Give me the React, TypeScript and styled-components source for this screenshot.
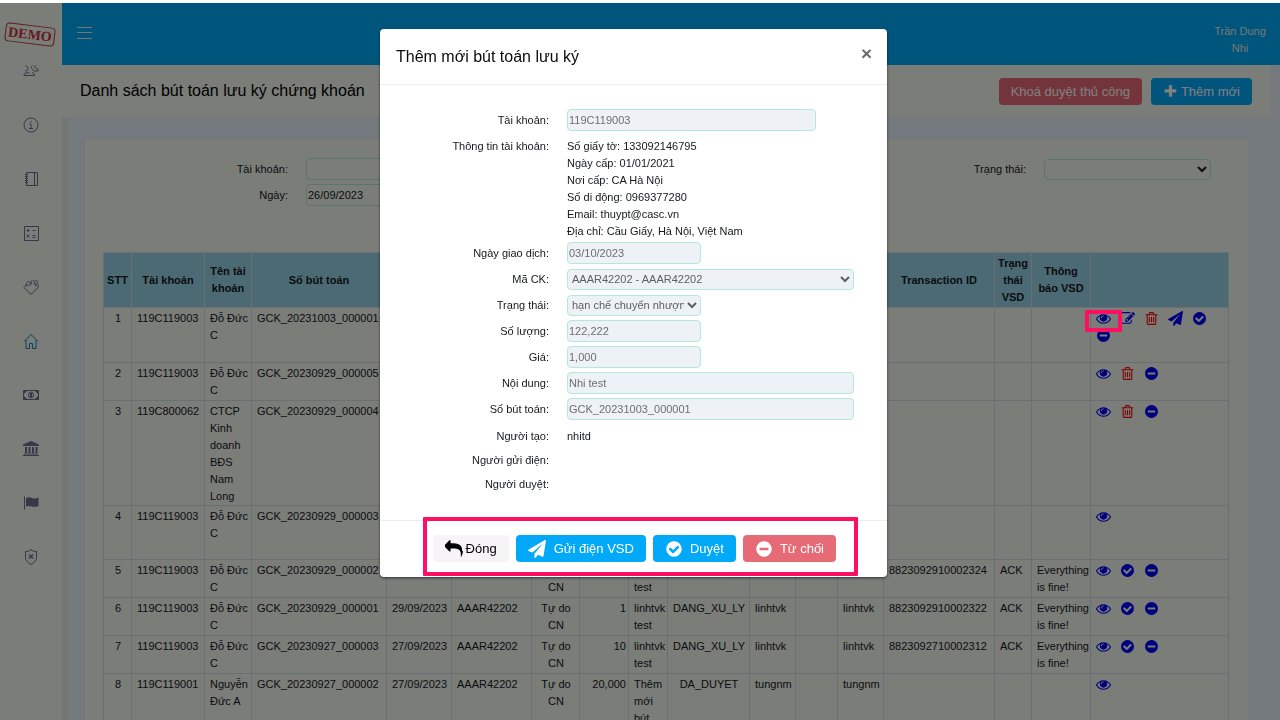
import React from "react";
import styled, { createGlobalStyle, css } from "styled-components";

const GlobalStyle = createGlobalStyle`
  *, *::before, *::after { box-sizing: border-box; }
  html, body { margin: 0; background: #fff; }
  body {
    font-family: "Liberation Sans", Arial, sans-serif;
    font-size: 11px;
    line-height: 17px;
    color: #15181c;
  }
  button, input, select { font-family: inherit; }
`;

/* ---------- icons ---------- */

const CIRCLE =
  "M1664 896q0 209-103 385.5t-279.5 279.5-385.5 103-385.5-103-279.5-279.5-103-385.5 103-385.5 279.5-279.5 385.5-103 385.5 103 279.5 279.5 103 385.5z";

const GLYPHS = {
  eye: "M1664 960q-152-236-381-353 61 104 61 225 0 185-131.5 316.5t-316.5 131.5-316.5-131.5-131.5-316.5q0-121 61-225-229 117-381 353 133 205 333.5 326.5t434.5 121.5 434.5-121.5 333.5-326.5zm-720-384q0-20-14-34t-34-14q-125 0-214.5 89.5t-89.5 214.5q0 20 14 34t34 14 34-14 14-34q0-86 61-147t147-61q20 0 34-14t14-34zm848 384q0 34-20 69-140 230-376.5 368.5t-499.5 138.5-499.5-139-376.5-368q-20-35-20-69t20-69q140-229 376.5-368t499.5-139 499.5 139 376.5 368q20 35 20 69z",
  edit: "M888 1184l116-116-152-152-116 116v56h96v96h56zm440-720q-16-16-33 1l-350 350q-17 17-1 33t33-1l350-350q17-17 1-33zm80 594v190q0 119-84.5 203.5t-203.5 84.5h-832q-119 0-203.5-84.5t-84.5-203.5v-832q0-119 84.5-203.5t203.5-84.5h832q63 0 117 25 15 7 18 23 3 17-9 29l-49 49q-14 14-32 8-23-6-45-6h-832q-66 0-113 47t-47 113v832q0 66 47 113t113 47h832q66 0 113-47t47-113v-126q0-13 9-22l64-64q15-15 35-7t20 29zm-96-738l288 288-672 672h-288v-288zm444 132l-92 92-288-288 92-92q28-28 68-28t68 28l152 152q28 28 28 68t-28 68z",
  trash:
    "M704 736v576q0 14-9 23t-23 9h-64q-14 0-23-9t-9-23v-576q0-14 9-23t23-9h64q14 0 23 9t9 23zm256 0v576q0 14-9 23t-23 9h-64q-14 0-23-9t-9-23v-576q0-14 9-23t23-9h64q14 0 23 9t9 23zm256 0v576q0 14-9 23t-23 9h-64q-14 0-23-9t-9-23v-576q0-14 9-23t23-9h64q14 0 23 9t9 23zm128 724v-948h-896v948q0 22 7 40.5t14.5 27 10.5 8.5h832q3 0 10.5-8.5t14.5-27 7-40.5zm-672-1076h448l-48-117q-7-9-17-11h-317q-10 2-17 11zm928 32v64q0 14-9 23t-23 9h-96v948q0 83-47 143.5t-113 60.5h-832q-66 0-113-58.5t-47-141.5v-952h-96q-14 0-23-9t-9-23v-64q0-14 9-23t23-9h309l70-167q15-37 54-63t79-26h320q40 0 79 26t54 63l70 167h309q14 0 23 9t9 23z",
  send: "M1764 11q33 24 27 64l-256 1536q-5 29-32 45-14 8-31 8-11 0-24-5l-453-185-242 295q-18 23-49 23-13 0-22-4-19-7-30.5-23.5t-11.5-36.5v-349l864-1059-1069 925-395-162q-37-14-40-55-2-40 32-59l1664-960q15-9 32-9 20 0 36 11z",
  check:
    "M1412 734q0-28-18-46l-91-90q-19-19-45-19t-45 19l-408 407-226-226q-19-19-45-19t-45 19l-91 90q-18 18-18 46 0 27 18 45l362 362q19 19 45 19 27 0 46-19l543-543q18-18 18-45z" +
    CIRCLE,
  minus:
    "M1344 960v-128q0-26-19-45t-45-19h-768q-26 0-45 19t-19 45v128q0 26 19 45t45 19h768q26 0 45-19t19-45z" +
    CIRCLE,
  plus: "M1600 736v192q0 40-28 68t-68 28h-416v416q0 40-28 68t-68 28h-192q-40 0-68-28t-28-68v-416h-416q-40 0-68-28t-28-68v-192q0-40 28-68t68-28h416v-416q0-40 28-68t68-28h192q40 0 68 28t28 68v416h416q40 0 68 28t28 68z",
  reply:
    "M1792 1120q0 166-127 451-3 7-10.5 24t-13.5 30-13 22q-12 17-28 17-15 0-23.5-10t-8.5-25q0-9 2.5-26.5t2.5-23.5q5-68 5-123 0-112-19.5-200.5t-54-153-89-111.5-118.5-77-149.5-46-175-24-196.5-7h-224v256q0 26-19 45t-45 19-45-19l-512-512q-19-19-19-45t19-45l512-512q19-19 45-19t45 19 19 45v256h224q713 0 875 403 53 134 53 333z",
};

type GlyphName = keyof typeof GLYPHS;

const Glyph = ({ name, size }: { name: GlyphName; size: number }) => (
  <svg width={size} height={size} viewBox="0 0 1792 1792" fill="currentColor" fillRule="evenodd" aria-hidden="true">
    <path d={GLYPHS[name]} />
  </svg>
);

const LineIcon = ({ children }: { children: React.ReactNode }) => (
  <svg width="16" height="16" viewBox="0 0 16 16" fill="none" stroke="currentColor" strokeWidth="1" aria-hidden="true">
    {children}
  </svg>
);

const MENU: { label: string; icon: React.ReactNode; active?: boolean }[] = [
  {
    label: "Khách hàng",
    icon: (
      <LineIcon>
        <path d="M2.500 2.500 5 4.500v2L2 8.500M1 12.500h10.500v-1.500L9 9.500M1 12.500V11l3-1.500 2.500.5M9.500 2.500c-1.500 1-1.500 2.500 0 4M13 2.500c-2 .5-2 2 0 2.500 2 .5 2.500 1.500 2 3h-3.500M9.500 6.500l2 2" />
      </LineIcon>
    ),
  },
  {
    label: "Thông tin",
    icon: (
      <LineIcon>
        <circle cx="8" cy="8" r="7" />
        <path d="M8 4v1.500M6.500 7H8v4.500M6 11.500h4" />
      </LineIcon>
    ),
  },
  {
    label: "Sổ",
    icon: (
      <LineIcon>
        <path d="M3.500 1.500h11v13h-11zM11.500 1.500v13M2 3.500h3M2 5.500h3M2 7.500h3M2 9.500h3M2 11.500h3" />
      </LineIcon>
    ),
  },
  {
    label: "Tính toán",
    icon: (
      <LineIcon>
        <path d="M1.500 1.500h14v14h-14zM3.500 5.500h3M5 4v3M9.500 5.500h3M3.500 9.500l3 3M6.500 9.500l-3 3M9.500 10.500h3M9.500 12.500h3" />
      </LineIcon>
    ),
  },
  {
    label: "Nhãn",
    icon: (
      <LineIcon>
        <path d="M3.500 5.500 1 8.500l7 7 7-7V5M3.500 6.500c1.500.5 3-.5 3.500-2S6 2 4.500 3s-1.500 2.500-1 3.500zM8.500 1.500C8 3 8.500 5 7.500 6.500M9.500 2c2-1 3 .5 2 1.500s-1 1.500.5 1.500 1.500 1.500 0 2.500M12.500 1.500c1.500-.5 2.500.5 2 2s-1.500 1.500-2.500 1.500" />
      </LineIcon>
    ),
  },
  {
    label: "Trang chủ",
    active: true,
    icon: (
      <LineIcon>
        <path d="M1 8.500 8 1.500l7 7M3 7v8.500h3.500v-5h3v5H13V7" />
      </LineIcon>
    ),
  },
  {
    label: "Tiền",
    icon: (
      <LineIcon>
        <path d="M.5 3.500h15v9H.5z" />
        <path d="M1 4h2.500L1 6.500zM15 4v2.500L12.500 4zM1 12V9.500L3.500 12zM15 12h-2.500L15 9.500z" fill="currentColor" />
        <ellipse cx="8" cy="8" rx="2.500" ry="3" />
        <path d="M8 6v4" strokeWidth="2" />
      </LineIcon>
    ),
  },
  {
    label: "Ngân hàng",
    icon: (
      <LineIcon>
        <path d="M8 0 0 3.500V5h16V3.500zM2 6h2v6H2zM5.500 6h2v6h-2zM9 6h2v6H9zM12.500 6h2v6h-2zM1 12.500h14v1H1zM0 14h16v1H0z" fill="currentColor" stroke="none" />
      </LineIcon>
    ),
  },
  {
    label: "Cờ",
    icon: (
      <LineIcon>
        <path d="M1.500 1.500v13" />
        <path d="M3 3.500c2-1.500 4-1.500 6-.5s4 .5 6.500-.5v8.500c-2.500 1-4.500 1-6.500.5s-4-1-6 0z" fill="currentColor" stroke="none" />
      </LineIcon>
    ),
  },
  {
    label: "Bảo mật",
    icon: (
      <LineIcon>
        <path d="M8 .5C7 2 4.500 2.500 2.500 2.500v6c0 3.500 3 5.500 5.500 7 2.500-1.500 5.500-3.500 5.500-7v-6C11.500 2.500 9 2 8 .5z" />
        <path d="M6 5.500l4 4M10 5.500l-4 4" strokeWidth="1.500" />
      </LineIcon>
    ),
  },
];

/* ---------- shell ---------- */

const Page = styled.div`
  display: flex;
  height: 100vh;
  padding-top: 3px;
  overflow: hidden;
`;

const Sidebar = styled.nav`
  flex: 0 0 62px;
  display: flex;
  flex-direction: column;
  align-items: center;
  padding-top: 22px;
  background: #f7faf3;
`;

const Logo = styled.div`
  width: 50px;
  height: 19px;
  margin: 0 3px 0 0;
  border: 1px solid #c8323a;
  border-radius: 4px;
  color: #c8323a;
  font: bold 14px/17px "Liberation Serif", serif;
  text-align: center;
  transform: rotate(7deg);
`;

const MenuLink = styled.a<{ $active?: boolean }>`
  display: flex;
  align-items: center;
  justify-content: center;
  width: 62px;
  height: 54px;
  color: ${(p) => (p.$active ? "#0a86c4" : "#6e6e92")};
`;

const Main = styled.div`
  flex: 1;
  min-width: 0;
  display: flex;
  flex-direction: column;
  background: #e9f2fc;
`;

const TopBar = styled.header`
  flex: 0 0 62px;
  display: flex;
  align-items: center;
  justify-content: space-between;
  padding: 0 12px 0 14px;
  background: #00aaf8;
`;

const MenuButton = styled.button`
  display: flex;
  padding: 0 0 2px;
  border: 0;
  background: none;
  color: #e6eef2;
`;

const UserName = styled.div`
  width: 56px;
  padding-top: 12px;
  text-align: center;
  color: #e8edf0;
`;

const TitleBar = styled.div`
  flex: 0 0 52px;
  display: flex;
  align-items: center;
  gap: 9px;
  margin-right: 9px;
  padding: 0 19px 0 18px;
  background: #f7faf3;
`;

const PageTitle = styled.h1`
  flex: 1;
  margin: 0;
  font-size: 16px;
  line-height: 24px;
  font-weight: 400;
  color: #000;
`;

const tones = {
  primary: css`
    background: #03a9f9;
    color: #fff;
  `,
  danger: css`
    background: #e76b77;
    color: #fff;
  `,
  plain: css`
    background: #f7f4f8;
    color: #000;
  `,
};

const Button = styled.button<{ $tone: keyof typeof tones; $gap?: number }>`
  display: flex;
  align-items: center;
  gap: ${(p) => p.$gap ?? 3}px;
  height: 27px;
  padding: 0 12px;
  border: 0;
  border-radius: 4px;
  font-size: 13px;
  white-space: nowrap;
  ${(p) => tones[p.$tone]}
`;

const Content = styled.main`
  flex: 1;
  min-height: 0;
  padding: 23px 32px 0 17px;
  border-left: 6px solid #ebebe8;
`;

const Card = styled.section`
  height: 100%;
  padding: 18px 20px 0 18px;
  background: #f7faf3;
`;

/* ---------- form controls ---------- */

const control = css`
  height: 22px;
  border: 1px solid #b4e8dc;
  border-radius: 4px;
  font-size: 11px;
  color: inherit;
  background: transparent;
`;

const TextInput = styled.input`
  ${control}
  width: 100%;
  padding: 0 1px;
  &:disabled {
    background: #eef1f6;
    color: #6b6f74;
  }
`;

const Select = styled.select`
  ${control}
  width: 100%;
  height: 21px;
  padding: 0;
  &:disabled {
    background: #eef1f6;
    color: #5c6065;
    opacity: 1;
  }
`;

const Filters = styled.form`
  display: grid;
  grid-template-columns: 185px 167px 1fr 167px;
  column-gap: 18px;
  row-gap: 4px;
  align-items: center;
  height: 94px;
  align-content: start;
  padding-right: 17px;
`;

const Label = styled.label`
  text-align: right;
`;

/* ---------- table ---------- */

const Table = styled.table`
  width: 100%;
  table-layout: fixed;
  border-collapse: collapse;
`;

const Th = styled.th`
  height: 55px;
  padding: 1px 3px;
  border: 1px solid #d4dee8;
  background: #98d4e8;
  font-weight: 700;
`;

const Td = styled.td<{ $align?: string }>`
  padding: 2px 0 0 5px;
  border: 1px solid #d4dee8;
  vertical-align: top;
  text-align: ${(p) => p.$align ?? "left"};
  padding-right: ${(p) => (p.$align === "center" ? 4 : p.$align === "right" ? 2 : 0)}px;
`;

const Row = styled.tr<{ $height: number }>`
  height: ${(p) => p.$height}px;
`;

const Actions = styled.div`
  display: flex;
  flex-wrap: wrap;
  column-gap: 9px;
  row-gap: 2px;
  width: 124px;
  padding-top: 1px;
`;

const ActionButton = styled.button<{ $danger?: boolean }>`
  position: relative;
  display: flex;
  justify-content: center;
  width: 15px;
  height: 15px;
  padding: 0;
  border: 0;
  background: none;
  color: ${(p) => (p.$danger ? "#ff0000" : "#0000ff")};
`;

const marker = css`
  content: "";
  position: absolute;
  z-index: 30;
  border: 4px solid #ff0f62;
  border-radius: 1px;
  pointer-events: none;
`;

const MarkedAction = styled(ActionButton)`
  &::after {
    ${marker}
    inset: -1px -11px -6px -11px;
  }
`;

/* ---------- dialog ---------- */

const Backdrop = styled.div`
  position: fixed;
  inset: 3px 0 0;
  z-index: 20;
  display: flex;
  align-items: flex-start;
  justify-content: center;
  padding: 26px 13px 0 0;
  background: rgba(0, 0, 0, 0.5);
`;

const Dialog = styled.div`
  width: 507px;
  border-radius: 4px;
  background: #fff;
  box-shadow: 0 1px 3px rgba(0, 0, 0, 0.6);
`;

const DialogHeader = styled.div`
  display: flex;
  justify-content: space-between;
  height: 56px;
  padding: 16px 15px 0 16px;
  border-bottom: 1px solid #ececee;
`;

const DialogTitle = styled.h2`
  margin: 0;
  font-size: 16px;
  line-height: 24px;
  font-weight: 400;
  color: #0c0c0f;
`;

const CloseButton = styled.button`
  height: 17px;
  padding: 0;
  border: 0;
  background: none;
  font-size: 19px;
  line-height: 17px;
  font-weight: 700;
  color: #6c6c6c;
`;

const DialogBody = styled.form`
  padding: 22px 33px 24px 0;
`;

const Field = styled.div<{ $height?: number }>`
  display: grid;
  grid-template-columns: 169px 1fr;
  column-gap: 18px;
  align-items: center;
  min-height: ${(p) => p.$height ?? 26}px;
`;

const InfoField = styled(Field)`
  align-items: start;
  padding-top: 5px;
`;

const Slot = styled.div<{ $width?: number }>`
  display: flex;
  width: ${(p) => (p.$width ? `${p.$width}px` : "100%")};
`;

const StaticFields = styled.div`
  padding-top: 2px;
`;

const DialogFooter = styled.div`
  position: relative;
  display: flex;
  align-items: center;
  justify-content: flex-end;
  gap: 7px;
  height: 57px;
  padding: 0 51px 1px 0;
  border-top: 1px solid #ececee;
  &::after {
    ${marker}
    inset: -4px 29px 1px 43px;
  }
`;

/* ---------- data ---------- */

const WIDTHS = [28, 73, 47, 135, 65, 80, 48, 49, 39, 82, 46, 42, 46, 111, 37, 59, 138];

const HEADERS = ["STT", "Tài khoản", "Tên tài khoản", "Số bút toán", "", "", "", "", "", "", "", "", "", "Transaction ID", "Trạng thái VSD", "Thông báo VSD", ""];

const ALIGN: Record<number, string> = { 0: "center", 6: "center", 7: "right", 9: "center" };

const blanks = Array<string>(12).fill("");
const done: GlyphName[] = ["eye", "check", "minus"];

const ROWS: { height: number; cells: string[]; actions: GlyphName[]; marked?: boolean }[] = [
  { height: 55, cells: ["1", "119C119003", "Đỗ Đức C", "GCK_20231003_000001", ...blanks], actions: ["eye", "edit", "trash", "send", "check", "minus"], marked: true },
  { height: 38, cells: ["2", "119C119003", "Đỗ Đức C", "GCK_20230929_000005", ...blanks], actions: ["eye", "trash", "minus"] },
  { height: 104, cells: ["3", "119C800062", "CTCP Kinh doanh BĐS Nam Long", "GCK_20230929_000004", ...blanks], actions: ["eye", "trash", "minus"] },
  { height: 54, cells: ["4", "119C119003", "Đỗ Đức C", "GCK_20230929_000003", ...blanks], actions: ["eye"] },
  { height: 38, cells: ["5", "119C119003", "Đỗ Đức C", "GCK_20230929_000002", "29/09/2023", "AAAR42202", "Tự do CN", "", "linhtvk test", "", "", "", "", "8823092910002324", "ACK", "Everything is fine!"], actions: done },
  { height: 38, cells: ["6", "119C119003", "Đỗ Đức C", "GCK_20230929_000001", "29/09/2023", "AAAR42202", "Tự do CN", "1", "linhtvk test", "DANG_XU_LY", "linhtvk", "", "linhtvk", "8823092910002322", "ACK", "Everything is fine!"], actions: done },
  { height: 38, cells: ["7", "119C119003", "Đỗ Đức C", "GCK_20230927_000003", "27/09/2023", "AAAR42202", "Tự do CN", "10", "linhtvk test", "DANG_XU_LY", "linhtvk", "", "linhtvk", "8823092710002312", "ACK", "Everything is fine!"], actions: done },
  { height: 54, cells: ["8", "119C119001", "Nguyễn Đức A", "GCK_20230927_000002", "27/09/2023", "AAAR42202", "Tự do CN", "20,000", "Thêm mới bút", "DA_DUYET", "tungnm", "", "tungnm", "", "", ""], actions: ["eye"] },
];

const ACTION_LABELS: Record<GlyphName, string> = {
  eye: "Xem",
  edit: "Sửa",
  trash: "Xoá",
  send: "Gửi điện VSD",
  check: "Duyệt",
  minus: "Từ chối",
  plus: "Thêm mới",
  reply: "Đóng",
};

const ACCOUNT_INFO = [
  "Số giấy tờ: 133092146795",
  "Ngày cấp: 01/01/2021",
  "Nơi cấp: CA Hà Nội",
  "Số di động: 0969377280",
  "Email: thuypt@casc.vn",
  "Địa chỉ: Cầu Giấy, Hà Nội, Việt Nam",
];

type FieldSpec = { id: string; label: string; value: string; width?: number; select?: boolean };

const FIELDS: FieldSpec[] = [
  { id: "tradeDate", label: "Ngày giao dịch:", value: "03/10/2023", width: 134 },
  { id: "symbol", label: "Mã CK:", value: "AAAR42202 - AAAR42202", select: true },
  { id: "state", label: "Trạng thái:", value: "hạn chế chuyển nhượng", width: 134, select: true },
  { id: "quantity", label: "Số lượng:", value: "122,222", width: 134 },
  { id: "price", label: "Giá:", value: "1,000", width: 134 },
  { id: "content", label: "Nội dung:", value: "Nhi test" },
  { id: "entryNo", label: "Số bút toán:", value: "GCK_20231003_000001" },
];

const FormField = ({ id, label, value, width, select }: FieldSpec) => (
  <Field>
    <Label htmlFor={id}>{label}</Label>
    <Slot $width={width}>
      {select ? (
        <Select id={id} disabled defaultValue={value}>
          <option>{value}</option>
        </Select>
      ) : (
        <TextInput id={id} disabled defaultValue={value} />
      )}
    </Slot>
  </Field>
);

/* ---------- app ---------- */

const EntryTable = () => (
  <Table>
    <colgroup>
      {WIDTHS.map((width, i) => (
        <col key={i} width={width} />
      ))}
    </colgroup>
    <thead>
      <tr>
        {HEADERS.map((text, i) => (
          <Th key={i}>{text}</Th>
        ))}
      </tr>
    </thead>
    <tbody>
      {ROWS.map((row) => (
        <Row key={row.cells[0]} $height={row.height}>
          {row.cells.map((text, i) => (
            <Td key={i} $align={ALIGN[i]}>
              {text}
            </Td>
          ))}
          <Td>
            <Actions>
              {row.actions.map((name) => {
                const Action = row.marked && name === "eye" ? MarkedAction : ActionButton;
                return (
                  <Action key={name} type="button" $danger={name === "trash"} aria-label={ACTION_LABELS[name]}>
                    <Glyph name={name} size={15} />
                  </Action>
                );
              })}
            </Actions>
          </Td>
        </Row>
      ))}
    </tbody>
  </Table>
);

const EntryDialog = () => (
  <Backdrop>
    <Dialog role="dialog" aria-labelledby="dialog-title">
      <DialogHeader>
        <DialogTitle id="dialog-title">Thêm mới bút toán lưu ký</DialogTitle>
        <CloseButton type="button" aria-label="Đóng">
          ×
        </CloseButton>
      </DialogHeader>
      <DialogBody>
        <FormField id="account" label="Tài khoản:" value="119C119003" width={249} />
        <InfoField>
          <Label as="span">Thông tin tài khoản:</Label>
          <div>
            {ACCOUNT_INFO.map((line) => (
              <div key={line}>{line}</div>
            ))}
          </div>
        </InfoField>
        {FIELDS.map((field) => (
          <FormField key={field.id} {...field} />
        ))}
        <StaticFields>
          {[
            ["Người tạo:", "nhitd"],
            ["Người gửi điện:", ""],
            ["Người duyệt:", ""],
          ].map(([label, value]) => (
            <Field key={label} $height={24}>
              <Label as="span">{label}</Label>
              <span>{value}</span>
            </Field>
          ))}
        </StaticFields>
      </DialogBody>
      <DialogFooter>
        <Button type="button" $tone="plain">
          <Glyph name="reply" size={18} />
          Đóng
        </Button>
        <Button type="button" $tone="primary" $gap={8}>
          <Glyph name="send" size={18} />
          Gửi điện VSD
        </Button>
        <Button type="button" $tone="primary" $gap={7}>
          <Glyph name="check" size={18} />
          Duyệt
        </Button>
        <Button type="button" $tone="danger" $gap={7}>
          <Glyph name="minus" size={18} />
          Từ chối
        </Button>
      </DialogFooter>
    </Dialog>
  </Backdrop>
);

export default function App() {
  return (
    <>
      <GlobalStyle />
      <Page>
        <Sidebar>
          <Logo>DEMO</Logo>
          {MENU.map(({ label, icon, active }) => (
            <MenuLink key={label} href="#" aria-label={label} $active={active}>
              {icon}
            </MenuLink>
          ))}
        </Sidebar>
        <Main>
          <TopBar>
            <MenuButton type="button" aria-label="Menu">
              <svg width="16" height="14" viewBox="0 0 16 14" stroke="currentColor" strokeWidth="1" aria-hidden="true">
                <path d="M1 1.500h15M1 6.500h15M1 12.500h15" />
              </svg>
            </MenuButton>
            <UserName>Trần Dung Nhi</UserName>
          </TopBar>
          <TitleBar>
            <PageTitle>Danh sách bút toán lưu ký chứng khoán</PageTitle>
            <Button type="button" $tone="danger">
              Khoá duyệt thủ công
            </Button>
            <Button type="button" $tone="primary">
              <Glyph name="plus" size={15} />
              Thêm mới
            </Button>
          </TitleBar>
          <Content>
            <Card>
              <Filters>
                <Label htmlFor="filterAccount">Tài khoản:</Label>
                <TextInput id="filterAccount" />
                <Label htmlFor="filterState">Trạng thái:</Label>
                <Select id="filterState" />
                <Label htmlFor="filterDate">Ngày:</Label>
                <TextInput id="filterDate" defaultValue="26/09/2023" />
              </Filters>
              <EntryTable />
            </Card>
          </Content>
        </Main>
      </Page>
      <EntryDialog />
    </>
  );
}
